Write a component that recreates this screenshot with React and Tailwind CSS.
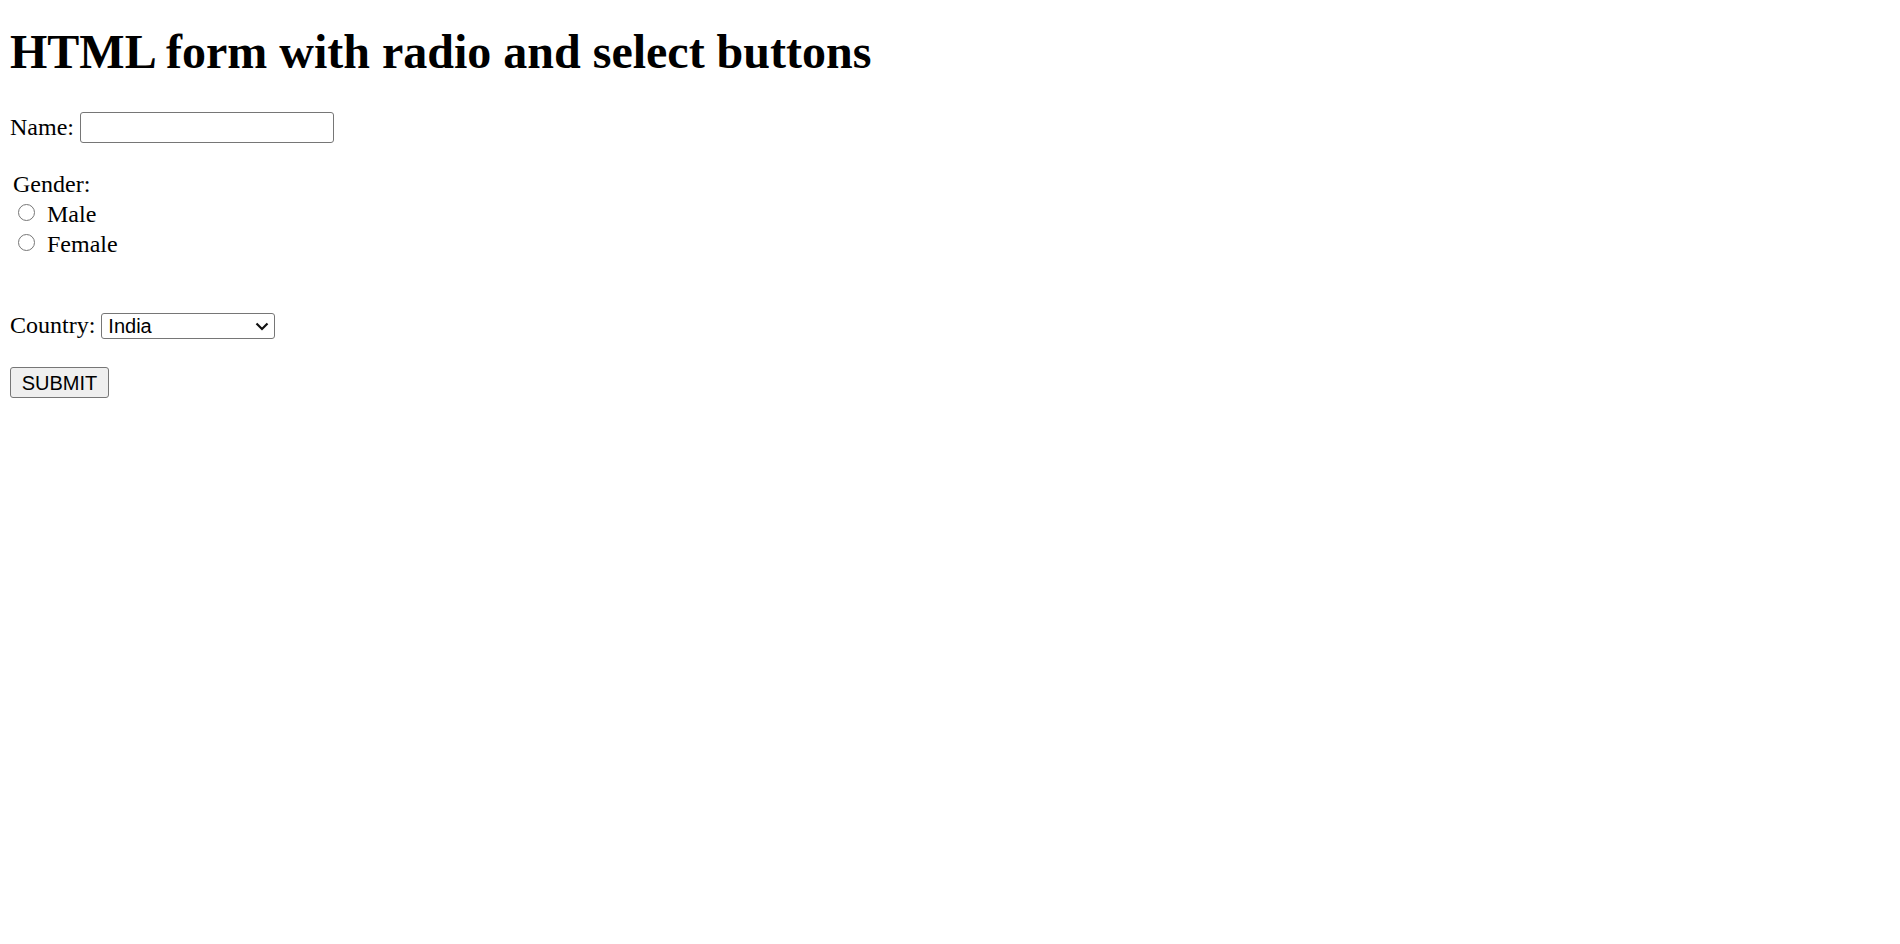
import React from 'react';

function Radio() {
  return <span className="inline-block w-[17px] h-[17px] rounded-full border border-[#767676] bg-white shrink-0" />;
}

function App() {
  return (
    <div className="min-h-screen bg-white text-black font-['Liberation_Serif',serif] text-[24px] px-[10px]">
      <h1 className="pt-[25px] text-[48px] leading-[53px] font-bold">HTML form with radio and select buttons</h1>

      <form onSubmit={(e) => e.preventDefault()}>
        {/* name */}
        <div className="mt-[34px] flex items-start h-[31px] gap-[6px]">
          <span className="leading-[31px]">Name:</span>
          <input
            type="text"
            className="block w-[254px] h-[31px] border border-[#767676] rounded-[3px] px-[3px] font-['Liberation_Sans',sans-serif] text-[20px] outline-none"
          />
        </div>

        {/* gender */}
        <div className="mt-[26px] pl-[3px] leading-[30px]">
          <div>Gender:</div>
          <label className="flex items-center h-[30px]">
            <span className="ml-[5px] mr-[12px] -mt-[3px] flex"><Radio /></span>
            Male
          </label>
          <label className="flex items-center h-[30px]">
            <span className="ml-[5px] mr-[12px] -mt-[3px] flex"><Radio /></span>
            Female
          </label>
        </div>

        {/* country */}
        <div className="mt-[54px] flex items-start h-[26px] gap-[6px]">
          <span className="leading-[24px]">Country:</span>
          <div className="relative w-[174px] h-[26px]">
            <select className="block appearance-none w-full h-full border border-[#767676] rounded-[3px] pl-[6px] font-['Liberation_Sans',sans-serif] text-[20px] leading-[22px] bg-white text-black outline-none">
              <option>India</option>
              <option>USA</option>
              <option>UK</option>
            </select>
            <svg className="absolute right-[6px] top-[9px] pointer-events-none" width="14" height="9" viewBox="0 0 14 9" fill="none">
              <path d="M1.5 1.5 L7 7 L12.5 1.5" stroke="#111" strokeWidth="2.2" />
            </svg>
          </div>
        </div>

        <div className="mt-[28px]">
          <button
            type="submit"
            className="block w-[99px] h-[31px] bg-[#efefef] border border-[#767676] rounded-[3px] font-['Liberation_Sans',sans-serif] text-[20px] leading-none text-black"
          >
            SUBMIT
          </button>
        </div>
      </form>
    </div>
  );
}

export default App;
